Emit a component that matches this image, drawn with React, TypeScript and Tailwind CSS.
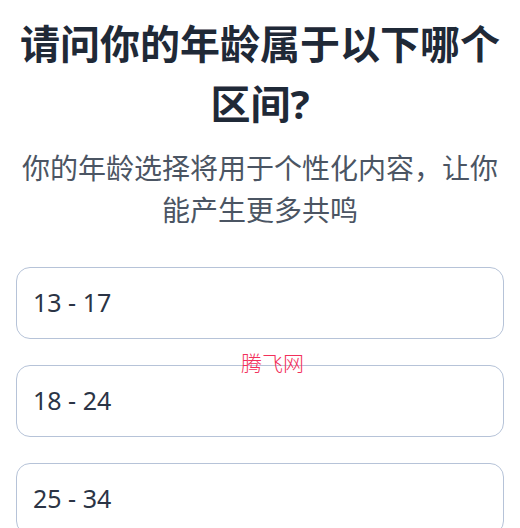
export default function App() {
  const ranges = ["13 - 17", "18 - 24", "25 - 34"];

  return (
    <div
      className="relative w-[520px] h-[528px] overflow-hidden bg-white px-4"
      style={{ fontFamily: '"Noto Sans", "Noto Sans CJK SC", sans-serif' }}
    >
      <h1 className="pt-[14px] text-center text-[40px] leading-[60px] font-bold text-[#1f2937]">
        请问你的年龄属于以下哪个区间?
      </h1>
      <p className="mt-[13px] text-center text-[28px] leading-[42px] text-[#4b5563]">
        你的年龄选择将用于个性化内容，让你能产生更多共鸣
      </p>
      <div className="mt-9 flex flex-col gap-[26px]">
        {ranges.map((r) => (
          <button
            key={r}
            className="flex h-[72px] w-full items-center rounded-[14px] border-[1.5px] border-[#b6c3d8] px-4 text-left text-[25px] text-[#2b3445]"
          >
            {r}
          </button>
        ))}
      </div>
      <div className="absolute left-[241px] top-[353px] text-[21px] font-light leading-none text-[#f2305a]">
        腾飞网
      </div>
    </div>
  );
}
